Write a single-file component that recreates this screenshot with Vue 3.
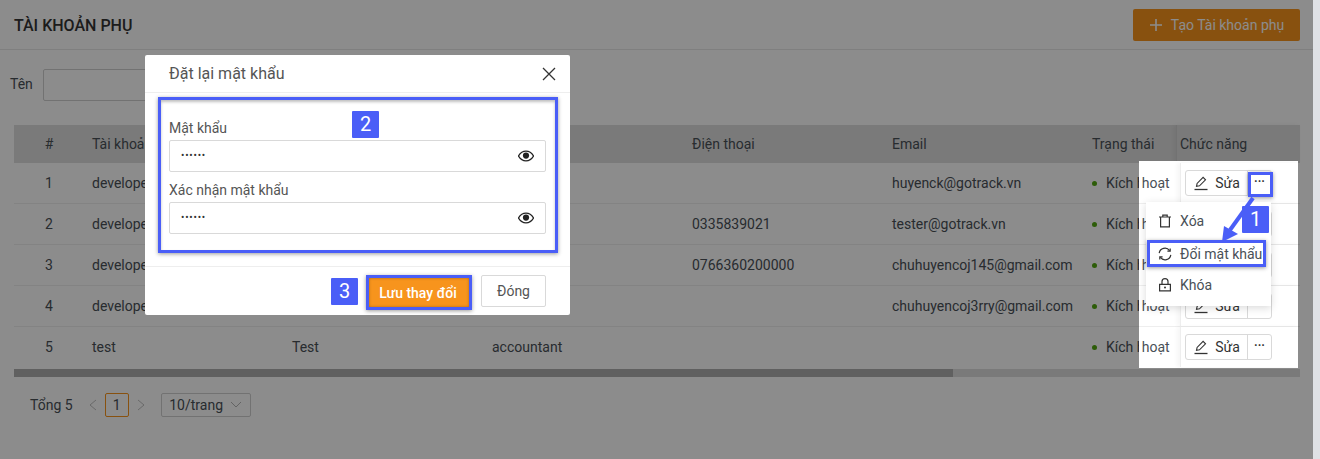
<script setup>
const columns = ['Tài khoản', 'Họ tên', 'Vai trò', 'Điện thoại', 'Email', 'Trạng thái']

const accounts = [
  { id: 1, user: 'developer', name: '', role: '', phone: '', email: 'huyenck@gotrack.vn' },
  { id: 2, user: 'developer', name: '', role: '', phone: '0335839021', email: 'tester@gotrack.vn' },
  { id: 3, user: 'developer', name: '', role: '', phone: '0766360200000', email: 'chuhuyencoj145@gmail.com' },
  { id: 4, user: 'developer', name: '', role: '', phone: '', email: 'chuhuyencoj3rry@gmail.com' },
  { id: 5, user: 'test', name: 'Test', role: 'accountant', phone: '', email: '' },
]

// the rows are drawn twice: dimmed under the overlay, and bright in the highlighted area
const layers = ['base', 'spot']
</script>

<template>
  <div class="screen">
    <div class="page">
      <header class="top">
        <h1>TÀI KHOẢN PHỤ</h1>
        <button class="create">
          <svg width="14" height="14" viewBox="0 0 14 14"><path d="M7 1v12M1 7h12" stroke="currentColor" stroke-width="1.6" fill="none" /></svg>
          Tạo Tài khoản phụ
        </button>
      </header>

      <div class="filter">
        <span class="filter-label">Tên</span>
        <div class="filter-input"></div>
      </div>

      <div class="head row-grid">
        <div class="center">#</div>
        <div v-for="c in columns" :key="c" class="cell">{{ c }}</div>
        <div class="head-action">Chức năng</div>
      </div>

      <div v-for="layer in layers" :key="layer" :class="layer">
        <div class="rows">
          <div v-for="a in accounts" :key="a.id" class="row row-grid">
            <div class="center">{{ a.id }}</div>
            <div class="cell">{{ a.user }}</div>
            <div class="cell">{{ a.name }}</div>
            <div class="cell">{{ a.role }}</div>
            <div class="cell">{{ a.phone }}</div>
            <div class="cell">{{ a.email }}</div>
            <div class="cell status"><i class="dot"></i>Kích hoạt</div>
            <div class="action">
              <div class="btn-group">
                <span class="edit">
                  <svg width="16" height="16" viewBox="0 0 16 16" fill="none" stroke="#333" stroke-width="1.1">
                    <path d="M3.5 11.4l.6-3 6-6 2.4 2.4-6 6z" />
                    <path d="M1.5 14.5h13" stroke-width="1.3" />
                  </svg>
                  Sửa
                </span>
                <span class="more">···</span>
              </div>
            </div>
          </div>
        </div>
      </div>

      <div class="scroll"><div class="thumb"></div></div>

      <div class="pager">
        <span class="total">Tổng 5</span>
        <svg class="arrow" width="10" height="12" viewBox="0 0 10 12"><path d="M8 1L2 6l6 5" fill="none" stroke="#c0c0c0" stroke-width="1" /></svg>
        <span class="current">1</span>
        <svg class="arrow" width="10" height="12" viewBox="0 0 10 12"><path d="M2 1l6 5-6 5" fill="none" stroke="#c0c0c0" stroke-width="1" /></svg>
        <span class="size">
          10/trang
          <svg width="12" height="8" viewBox="0 0 12 8"><path d="M1 1l5 5 5-5" fill="none" stroke="#b5b5b5" stroke-width="1" /></svg>
        </span>
      </div>

      <div class="overlay"></div>
    </div>

    <div class="menu">
      <div class="menu-item">
        <svg width="14" height="14" viewBox="0 0 14 14" fill="none" stroke="#333" stroke-width="1.2">
          <path d="M1 3h12M4.8 3V1.200h4.400V3M2.600 3v9.800h8.800V3" />
        </svg>
        Xóa
      </div>
      <div class="menu-item mid">
        <svg width="14" height="14" viewBox="0 0 14 14" fill="none" stroke="#333" stroke-width="1.2">
          <path d="M1.2 6.2A5.8 5.8 0 0 1 11.6 3.6" />
          <path d="M12.8 7.8A5.8 5.8 0 0 1 2.4 10.4" />
          <path d="M12.2 1.4v2.8H9.4M1.8 12.6V9.8h2.8" />
        </svg>
        Đổi mật khẩu
      </div>
      <div class="menu-item">
        <svg width="14" height="14" viewBox="0 0 14 14" fill="none" stroke="#333" stroke-width="1.2">
          <path d="M1.6 6.4h10.8v6.4H1.6zM4 6.4V3.6a3 3 0 0 1 6 0v2.8" />
          <circle cx="7" cy="9.6" r="1" fill="#333" stroke="none" />
        </svg>
        Khóa
      </div>
    </div>

    <div class="mark mark-more"></div>
    <div class="mark mark-item"></div>
    <svg class="pointer" width="50" height="60" viewBox="0 0 50 60">
      <path d="M37 4L14 36" stroke="#4a5ef7" stroke-width="4" fill="none" />
      <path d="M6 48l2-16 14 8z" fill="#4a5ef7" />
    </svg>
    <span class="badge badge-1">1</span>

    <div class="modal">
      <div class="modal-head">
        <span>Đặt lại mật khẩu</span>
        <svg width="14" height="14" viewBox="0 0 14 14"><path d="M1 1l12 12M13 1L1 13" stroke="#333" stroke-width="1.3" fill="none" /></svg>
      </div>
      <div class="modal-body">
        <div class="form-box">
          <label>Mật khẩu</label>
          <div class="pass">
            <span class="dots">••••••</span>
            <svg width="16" height="16" viewBox="0 0 16 16"><path d="M.5 8C2.4 4.8 5 3.2 8 3.2s5.6 1.6 7.5 4.8c-1.9 3.2-4.5 4.8-7.5 4.8S2.4 11.2.5 8z" fill="none" stroke="#222" stroke-width="1.3" /><circle cx="8" cy="7.6" r="3.1" fill="#222" /></svg>
          </div>
          <label>Xác nhận mật khẩu</label>
          <div class="pass">
            <span class="dots">••••••</span>
            <svg width="16" height="16" viewBox="0 0 16 16"><path d="M.5 8C2.4 4.8 5 3.2 8 3.2s5.6 1.6 7.5 4.8c-1.9 3.2-4.5 4.8-7.5 4.8S2.4 11.2.5 8z" fill="none" stroke="#222" stroke-width="1.3" /><circle cx="8" cy="7.6" r="3.1" fill="#222" /></svg>
          </div>
        </div>
        <span class="badge badge-2">2</span>
      </div>
      <div class="modal-foot">
        <span class="badge">3</span>
        <button class="save">Lưu thay đổi</button>
        <button class="close">Đóng</button>
      </div>
    </div>
  </div>
</template>

<style>
html, body {
  margin: 0;
  background: #dfe1e5;
}
</style>

<style scoped>
.screen {
  position: relative;
  width: 1320px;
  height: 459px;
  overflow: hidden;
  background: #dfe1e5;
  font-family: Roboto, "Liberation Sans", sans-serif;
  font-size: 14px;
  color: #495057;
}

.page {
  position: relative;
  width: 1313px;
  height: 459px;
  background: #fff;
}

.overlay {
  position: absolute;
  inset: 0;
  z-index: 1;
  background: rgba(0, 0, 0, 0.45);
}

.top {
  height: 49px;
  box-sizing: content-box;
  border-bottom: 1px solid #e8e8e8;
  padding: 0 13px 0 14px;
  display: flex;
  align-items: center;
  justify-content: space-between;
}

h1 {
  margin: 0;
  padding-top: 2px;
  font-size: 16px;
  font-weight: 500;
  color: #333;
}

.create {
  width: 167px;
  height: 32px;
  border: 0;
  border-radius: 2px;
  background: #f7941d;
  color: #fff;
  font: 14px Roboto, sans-serif;
  display: flex;
  align-items: center;
  justify-content: center;
  gap: 8px;
}

.filter {
  display: flex;
  align-items: center;
  gap: 10px;
  height: 32px;
  margin: 19px 0 24px 10px;
}

.filter-label {
  padding-bottom: 2px;
}

.filter-input {
  width: 200px;
  height: 30px;
  border: 1px solid #d0d0d0;
  border-radius: 2px;
}

.row-grid {
  display: grid;
  grid-template-columns: 58px repeat(5, 200px) 108px 120px;
  align-items: center;
}

.head {
  width: 1286px;
  height: 38px;
  margin-left: 14px;
  background: #dedede;
}

.center {
  text-align: center;
  padding-left: 12px;
}

.cell {
  padding-left: 20px;
  white-space: nowrap;
}

.head-action {
  height: 38px;
  line-height: 38px;
  margin-left: -4px;
  padding-left: 3px;
  border-left: 1px solid #d0d0d0;
  box-shadow: -2px 0 4px rgba(0, 0, 0, 0.05);
}

.base {
  margin-left: 14px;
  width: 1286px;
  height: 205px;
}

.spot {
  position: absolute;
  z-index: 2;
  left: 1139px;
  top: 161px;
  width: 159px;
  height: 207px;
  overflow: hidden;
  background: #fff;
}

.spot .rows {
  width: 1286px;
  margin: 2px 0 0 -1125px;
}

/* the bright area was pasted a few pixels to the right in the original */
.spot .status {
  padding-left: 25px;
}

.row {
  height: 41px;
  box-sizing: border-box;
  border-bottom: 1px solid #eee;
}

.row:last-child {
  border-bottom: 0;
  height: 40px;
}

.status {
  display: flex;
  align-items: center;
}

.dot {
  width: 5px;
  height: 5px;
  border-radius: 50%;
  background: #52a810;
  margin-right: 9px;
}

.action {
  height: 100%;
  display: flex;
  align-items: center;
  padding-left: 4px;
  border-left: 1px solid #eee;
  box-sizing: border-box;
  background: #fff;
  box-shadow: -3px 0 4px rgba(0, 0, 0, 0.04);
}

.btn-group {
  display: flex;
  height: 24px;
  border: 1px solid #d9d9d9;
  border-radius: 3px;
  color: #333;
  background: #fff;
}

.edit {
  width: 61px;
  display: flex;
  align-items: center;
  justify-content: center;
  gap: 6px;
  border-right: 1px solid #d9d9d9;
}

.more {
  width: 23px;
  text-align: center;
  line-height: 23px;
  font-weight: 700;
  font-size: 12px;
}

.scroll {
  width: 1286px;
  height: 8px;
  margin: 1px 0 0 14px;
  background: #dedede;
}

.thumb {
  width: 939px;
  height: 8px;
  background: #b0b0b0;
}

.pager {
  display: flex;
  align-items: center;
  margin: 16px 0 0 30px;
  height: 24px;
}

.total {
  margin-right: 15px;
}

.arrow {
  flex: none;
}

.current {
  width: 22px;
  height: 22px;
  margin: 0 7px;
  border: 1px solid #f7941d;
  border-radius: 2px;
  text-align: center;
  line-height: 23px;
}

.size {
  margin-left: 15px;
  width: 88px;
  height: 22px;
  border: 1px solid #d0d0d0;
  border-radius: 2px;
  display: flex;
  align-items: center;
  justify-content: center;
  gap: 7px;
}

.menu {
  position: absolute;
  z-index: 3;
  left: 1146px;
  top: 202px;
  width: 125px;
  height: 104px;
  padding-top: 3px;
  box-sizing: border-box;
  background: #fff;
  box-shadow: 0 2px 8px rgba(0, 0, 0, 0.15);
}

.menu-item {
  height: 32px;
  display: flex;
  align-items: center;
  gap: 8px;
  padding-left: 12px;
  color: #495057;
}

.menu-item.mid {
  height: 33px;
  margin-bottom: -1px;
  white-space: nowrap;
}

.mark {
  position: absolute;
  z-index: 4;
  box-sizing: border-box;
  border: 3px solid #4a5ef7;
  box-shadow: 0 1px 4px rgba(0, 0, 0, 0.4);
}

.mark-more {
  left: 1248px;
  top: 172px;
  width: 25px;
  height: 25px;
}

.mark-item {
  left: 1147px;
  top: 240px;
  width: 119px;
  height: 27px;
}

.pointer {
  position: absolute;
  z-index: 5;
  left: 1216px;
  top: 194px;
}

.badge {
  width: 27px;
  height: 27px;
  background: #4a5ef7;
  color: #fff;
  font-size: 20px;
  line-height: 27px;
  text-align: center;
  border-radius: 1px;
}

.badge-1 {
  position: absolute;
  z-index: 6;
  left: 1242px;
  top: 206px;
}

.modal {
  position: absolute;
  z-index: 7;
  left: 145px;
  top: 55px;
  width: 425px;
  height: 260px;
  background: #fff;
  border-radius: 2px;
  color: #555;
}

.modal-head {
  height: 38px;
  box-sizing: border-box;
  border-bottom: 1px solid #eee;
  padding: 0 14px 0 24px;
  display: flex;
  align-items: center;
  justify-content: space-between;
  font-size: 16px;
}

.modal-body {
  position: relative;
  height: 174px;
  padding: 4px 12px 0 13px;
  box-sizing: border-box;
  border-bottom: 1px solid #eee;
}

.form-box {
  height: 156px;
  box-sizing: border-box;
  border: 3px solid #4a5ef7;
  padding: 20px 9px 0 8px;
  box-shadow: 0 1px 4px rgba(0, 0, 0, 0.4), inset 0 2px 3px rgba(0, 0, 0, 0.25);
}

label {
  display: block;
  height: 16px;
  line-height: 16px;
}

.pass {
  height: 30px;
  margin: 4px 0 10px;
  border: 1px solid #d9d9d9;
  border-radius: 2px;
  display: flex;
  align-items: center;
  justify-content: space-between;
  padding: 0 11px 0 11px;
}

.pass:last-child {
  margin-bottom: 0;
}

.dots {
  font-size: 10px;
  letter-spacing: 0.8px;
  padding-bottom: 2px;
  color: #333;
}

.badge-2 {
  position: absolute;
  left: 207px;
  top: 18px;
}

.modal-foot {
  display: flex;
  align-items: flex-start;
  padding: 8px 24px 0 0;
  justify-content: flex-end;
}

.modal-foot .badge {
  margin: 3px 8px 0 0;
}

.save {
  width: 106px;
  height: 35px;
  box-sizing: border-box;
  border: 3px solid #4a5ef7;
  background: #f7941d;
  color: #fff;
  font: 500 14px Roboto, sans-serif;
  padding: 0 2px 0 0;
  box-shadow: 0 1px 4px rgba(0, 0, 0, 0.4), inset 0 0 3px rgba(0, 0, 0, 0.3);
}

.close {
  width: 65px;
  height: 32px;
  margin-left: 9px;
  border: 1px solid #d9d9d9;
  border-radius: 2px;
  background: #fff;
  color: #555;
  font: 14px Roboto, sans-serif;
}
</style>
